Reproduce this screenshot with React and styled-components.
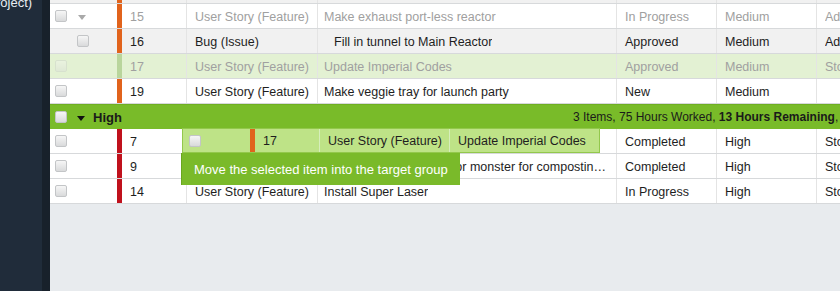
import React from "react";
import styled, { createGlobalStyle } from "styled-components";

const Global = createGlobalStyle`
  html, body { margin: 0; padding: 0; }
  body { font-family: "Liberation Sans", Arial, sans-serif; overflow: hidden; }
  #root { height: 291px; }
`;

const Page = styled.div`
  display: flex;
  height: 291px;
  width: 840px;
  overflow: hidden;
`;

const Sidebar = styled.aside`
  flex: 0 0 42px;
  background: #202c3a;
  border-right: 8px solid #18212b;
  overflow: hidden;
  color: #e8edf2;
  font-size: 13px;
  line-height: 15px;
`;

const SidebarLabel = styled.div`
  white-space: nowrap;
  margin: -5px 0 0 -17px;
`;

const Main = styled.main`
  flex: 1;
  position: relative;
  background: #e8ebee;
  overflow: hidden;
`;

const Table = styled.div`
  width: 867px;
  margin-top: -21px;
  font-size: 12.5px;
`;

const Row = styled.div`
  display: grid;
  grid-template-columns: 67px 5px 65px 131px 299px 100px 100px 100px;
  height: 25px;
  box-sizing: border-box;
  border-bottom: 1px solid #d7d9db;
  background: ${(p) => (p.$tone === "gray" ? "#f1f1f1" : p.$tone === "green" ? "#e3f1d3" : "#fff")};
  color: ${(p) => (p.$muted ? "#a0a0a0" : "#1e1e1e")};
`;

const Cell = styled.div`
  display: flex;
  align-items: center;
  padding: 1px 8px 0 ${(p) => p.$pad ?? 8}px;
  border-right: ${(p) => (p.$sep ? "1px solid #e4e4e4" : "none")};
  white-space: nowrap;
  overflow: hidden;
  min-width: 0;
`;

const CellText = styled.span`
  overflow: hidden;
  text-overflow: ellipsis;
  white-space: nowrap;
`;

const CheckCell = styled.div`
  display: flex;
  align-items: center;
  padding-left: ${(p) => p.$indent ?? 5}px;
  gap: 11px;
`;

const Check = styled.span`
  display: inline-block;
  width: 12px;
  height: 12px;
  box-sizing: border-box;
  border: 1px solid #c3c5c7;
  border-radius: 2px;
  background: linear-gradient(#f6f6f6, #d9dadb);
  opacity: ${(p) => (p.$faded ? 0.35 : 1)};
  flex: 0 0 auto;
`;

const Caret = styled.span`
  width: 0;
  height: 0;
  border-left: 4.5px solid transparent;
  border-right: 4.5px solid transparent;
  border-top: 5px solid ${(p) => p.$color};
  margin-top: 2px;
`;

const Bar = styled.div`
  background: ${(p) => p.$color};
`;

const GroupHeader = styled.div`
  display: flex;
  align-items: center;
  height: 25px;
  box-sizing: border-box;
  background: #79bb29;
  border-top: 1px solid #6fae22;
  color: #1a1a1a;
  font-size: 12.5px;
`;

const GroupLeft = styled.div`
  flex: 0 0 523px;
  display: flex;
  align-items: center;
  gap: 10px;
  padding-left: 5px;
  box-sizing: border-box;
`;

const GroupTitle = styled.span`
  font-weight: bold;
  font-size: 13px;
  margin-left: -2px;
`;

const GroupSummary = styled.span`
  white-space: nowrap;
  font-size: 12px;
  b { font-weight: bold; }
`;

const DragProxy = styled.div`
  position: absolute;
  left: 132px;
  top: 128px;
  width: 418px;
  height: 25px;
  box-sizing: border-box;
  display: grid;
  grid-template-columns: 67px 5px 65px 130px 1fr;
  background: #bee387;
  border: 1px solid #93c84c;
  font-size: 12.5px;
  color: #1e1e1e;
`;

const ProxyCell = styled.div`
  display: flex;
  align-items: center;
  padding: 1px 0 0 ${(p) => p.$pad ?? 8}px;
  border-right: ${(p) => (p.$sep ? "1px solid #d6eebb" : "none")};
  white-space: nowrap;
  overflow: hidden;
`;

const Tooltip = styled.div`
  position: absolute;
  left: 131px;
  top: 153px;
  width: 279px;
  height: 32px;
  box-sizing: border-box;
  display: flex;
  align-items: center;
  padding: 1px 0 0 12px;
  background: #7aba2a;
  border-left: 1px solid #6aa61f;
  color: #fff;
  font-size: 13px;
  white-space: nowrap;
`;

const ORANGE = "#e1631c";
const RED = "#c0111d";

const rows = [
  { id: "12", type: "User Story (Feature)", title: "Build shield generator", status: "Completed", pri: "Medium", last: "Administration", tone: "gray", bar: ORANGE },
  { id: "15", type: "User Story (Feature)", title: "Make exhaust port-less reactor", status: "In Progress", pri: "Medium", last: "Administration", muted: true, caret: true, bar: ORANGE },
  { id: "16", type: "Bug (Issue)", title: "Fill in tunnel to Main Reactor", status: "Approved", pri: "Medium", last: "Administration", tone: "gray", child: true, bar: ORANGE },
  { id: "17", type: "User Story (Feature)", title: "Update Imperial Codes", status: "Approved", pri: "Medium", last: "Storage", tone: "green", muted: true, faded: true, bar: "#b9d59c" },
  { id: "19", type: "User Story (Feature)", title: "Make veggie tray for launch party", status: "New", pri: "Medium", last: "", bar: ORANGE },
];

const highRows = [
  { id: "7", type: "", title: "", status: "Completed", pri: "High", last: "Storage" },
  { id: "9", type: "User Story (Feature)", title: "Feed the trash compactor monster for composting waste", status: "Completed", pri: "High", last: "Storage" },
  { id: "14", type: "User Story (Feature)", title: "Install Super Laser", status: "In Progress", pri: "High", last: "Storage" },
];

function DataRow({ r, bar }) {
  return (
    <Row $tone={r.tone} $muted={r.muted}>
      <CheckCell $indent={r.child ? 27 : 5}>
        <Check $faded={r.faded} />
        {r.caret && <Caret $color="#a9a9a9" />}
      </CheckCell>
      <Bar $color={bar || r.bar} />
      <Cell $sep>{r.id}</Cell>
      <Cell $sep>
        <CellText>{r.type}</CellText>
      </Cell>
      <Cell $sep $pad={r.child ? 16 : 6}>
        <CellText>{r.title}</CellText>
      </Cell>
      <Cell $sep>{r.status}</Cell>
      <Cell $sep>{r.pri}</Cell>
      <Cell>
        <CellText>{r.last}</CellText>
      </Cell>
    </Row>
  );
}

export default function App() {
  return (
    <>
      <Global />
      <Page>
        <Sidebar>
          <SidebarLabel>(Project)</SidebarLabel>
        </Sidebar>
        <Main>
          <Table>
            {rows.map((r) => (
              <DataRow key={r.id} r={r} />
            ))}
            <GroupHeader>
              <GroupLeft>
                <Check />
                <Caret $color="#111" />
                <GroupTitle>High</GroupTitle>
              </GroupLeft>
              <GroupSummary>
                3 Items, 75 Hours Worked, <b>13 Hours Remaining</b>, 8 Hours Estimated
              </GroupSummary>
            </GroupHeader>
            {highRows.map((r) => (
              <DataRow key={r.id} r={r} bar={RED} />
            ))}
          </Table>
          <DragProxy>
            <ProxyCell $pad={6}>
              <Check />
            </ProxyCell>
            <Bar $color={ORANGE} />
            <ProxyCell $sep>17</ProxyCell>
            <ProxyCell $sep>User Story (Feature)</ProxyCell>
            <ProxyCell>Update Imperial Codes</ProxyCell>
          </DragProxy>
          <Tooltip>Move the selected item into the target group</Tooltip>
        </Main>
      </Page>
    </>
  );
}
